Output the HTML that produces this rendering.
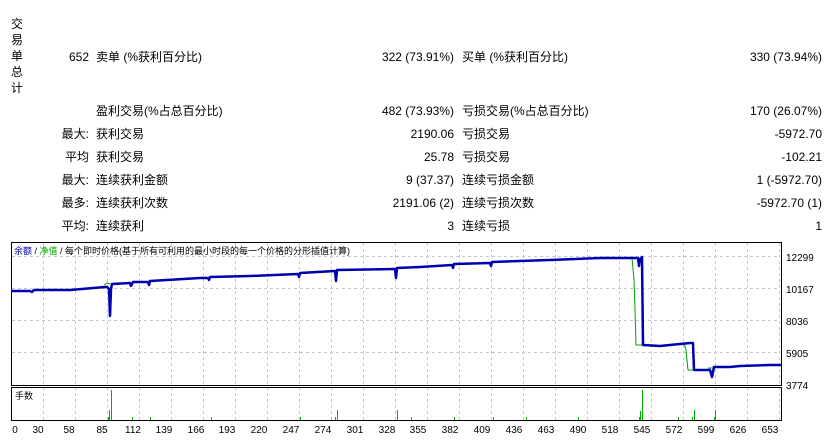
<!DOCTYPE html>
<html><head><meta charset="utf-8"><style>
body{margin:0;width:832px;height:442px;background:#fff;overflow:hidden;position:relative;font-family:"Liberation Sans","Noto Sans CJK SC",sans-serif;font-size:12px;color:#000}
.t{position:absolute;white-space:nowrap;line-height:14px}
.r{text-align:right}
.vc{position:absolute;left:11px;top:16px;width:14px;line-height:16px;font-size:12px}
</style></head><body>
<div class="vc">交<br>易<br>单<br>总<br>计</div>

<div class="t r" style="right:743px;top:50px">652</div>
<div class="t" style="left:96px;top:50px">卖单 (%获利百分比)</div>
<div class="t r" style="right:378px;top:50px">322 (73.91%)</div>
<div class="t" style="left:462px;top:50px">买单 (%获利百分比)</div>
<div class="t r" style="right:10px;top:50px">330 (73.94%)</div>

<div class="t" style="left:96px;top:104px">盈利交易(%占总百分比)</div>
<div class="t r" style="right:378px;top:104px">482 (73.93%)</div>
<div class="t" style="left:462px;top:104px">亏损交易(%占总百分比)</div>
<div class="t r" style="right:10px;top:104px">170 (26.07%)</div>

<div class="t r" style="right:743px;top:127px">最大:</div>
<div class="t" style="left:96px;top:127px">获利交易</div>
<div class="t r" style="right:378px;top:127px">2190.06</div>
<div class="t" style="left:462px;top:127px">亏损交易</div>
<div class="t r" style="right:10px;top:127px">-5972.70</div>

<div class="t r" style="right:743px;top:150px">平均</div>
<div class="t" style="left:96px;top:150px">获利交易</div>
<div class="t r" style="right:378px;top:150px">25.78</div>
<div class="t" style="left:462px;top:150px">亏损交易</div>
<div class="t r" style="right:10px;top:150px">-102.21</div>

<div class="t r" style="right:743px;top:173px">最大:</div>
<div class="t" style="left:96px;top:173px">连续获利金额</div>
<div class="t r" style="right:378px;top:173px">9 (37.37)</div>
<div class="t" style="left:462px;top:173px">连续亏损金额</div>
<div class="t r" style="right:10px;top:173px">1 (-5972.70)</div>

<div class="t r" style="right:743px;top:196px">最多:</div>
<div class="t" style="left:96px;top:196px">连续获利次数</div>
<div class="t r" style="right:378px;top:196px">2191.06 (2)</div>
<div class="t" style="left:462px;top:196px">连续亏损次数</div>
<div class="t r" style="right:10px;top:196px">-5972.70 (1)</div>

<div class="t r" style="right:743px;top:219px">平均:</div>
<div class="t" style="left:96px;top:219px">连续获利</div>
<div class="t r" style="right:378px;top:219px">3</div>
<div class="t" style="left:462px;top:219px">连续亏损</div>
<div class="t r" style="right:10px;top:219px">1</div>

<svg style="position:absolute;left:0;top:0" width="832" height="442" font-family="Liberation Sans, Noto Sans CJK SC, sans-serif">
<g stroke="#c8c8c8" stroke-dasharray="3,3" stroke-width="1">
<line x1="43.5" y1="243" x2="43.5" y2="420"/><line x1="75.5" y1="243" x2="75.5" y2="420"/><line x1="107.5" y1="243" x2="107.5" y2="420"/><line x1="139.5" y1="243" x2="139.5" y2="420"/><line x1="171.5" y1="243" x2="171.5" y2="420"/><line x1="203.5" y1="243" x2="203.5" y2="420"/><line x1="235.5" y1="243" x2="235.5" y2="420"/><line x1="267.5" y1="243" x2="267.5" y2="420"/><line x1="299.5" y1="243" x2="299.5" y2="420"/><line x1="331.5" y1="243" x2="331.5" y2="420"/><line x1="363.5" y1="243" x2="363.5" y2="420"/><line x1="395.5" y1="243" x2="395.5" y2="420"/><line x1="427.5" y1="243" x2="427.5" y2="420"/><line x1="459.5" y1="243" x2="459.5" y2="420"/><line x1="491.5" y1="243" x2="491.5" y2="420"/><line x1="523.5" y1="243" x2="523.5" y2="420"/><line x1="555.5" y1="243" x2="555.5" y2="420"/><line x1="587.5" y1="243" x2="587.5" y2="420"/><line x1="619.5" y1="243" x2="619.5" y2="420"/><line x1="651.5" y1="243" x2="651.5" y2="420"/><line x1="683.5" y1="243" x2="683.5" y2="420"/><line x1="715.5" y1="243" x2="715.5" y2="420"/><line x1="747.5" y1="243" x2="747.5" y2="420"/><line x1="779.5" y1="243" x2="779.5" y2="420"/>
<line x1="12" y1="256.5" x2="780" y2="256.5"/><line x1="12" y1="288.5" x2="780" y2="288.5"/><line x1="12" y1="320.5" x2="780" y2="320.5"/><line x1="12" y1="352.5" x2="780" y2="352.5"/>
</g>
<rect x="11.5" y="242.5" width="770" height="143" fill="none" stroke="#000"/>
<rect x="11.5" y="387.5" width="770" height="33" fill="none" stroke="#000"/>
<text x="14" y="254" font-size="9"><tspan fill="#0000a0">余额</tspan> / <tspan fill="#00a000">净值</tspan> / 每个即时价格(基于所有可利用的最小时段的每一个价格的分形插值计算)</text>
<text x="15" y="399" font-size="9">手数</text>
<polyline fill="none" stroke="#00a000" stroke-width="1" points="104,285 107,283 110,284"/>
<polyline fill="none" stroke="#00a000" stroke-width="1" points="626,258 632,258 634,280 635,310 636,345 643,345"/>
<polyline fill="none" stroke="#00a000" stroke-width="1" points="684,343 686,350 688,370 694,370"/>
<polyline fill="none" stroke="#00a000" stroke-width="1" points="708,368 713,368"/>
<polyline fill="none" stroke="#0000b0" stroke-width="2.5" stroke-linejoin="round" points="11,291 30,291 32,292 34,290 70,290 105,287 107,287 109,289 110,316 111,289 112,284 130,283 131,286 133,282 148,282 149,285 150,281 200,278 208,278 209,280 210,277 250,276 298,274 299,277 300,273 335,271 336,281 337,270 395,269 396,278 397,268 420,267 452,265 453,268 454,264 490,263 491,266 492,262 520,261 550,260 600,258 608,258 625,258 638,258 639,266 640,259 641,258 642,257 643,345 660,346 680,344 690,343 692,343 693,343 694,370 710,370 712,377 714,367 730,367 740,366 770,365 781,365"/>
<g stroke="#00b000" stroke-width="1">
<line x1="111.5" y1="390" x2="111.5" y2="420"/><line x1="109.5" y1="410" x2="109.5" y2="420"/><line x1="108.5" y1="417" x2="108.5" y2="420"/>
<line x1="132.5" y1="417" x2="132.5" y2="420"/><line x1="150.5" y1="417" x2="150.5" y2="420"/><line x1="211.5" y1="417" x2="211.5" y2="420"/>
<line x1="300.5" y1="417" x2="300.5" y2="420"/><line x1="337.5" y1="410" x2="337.5" y2="420"/><line x1="335.5" y1="417" x2="335.5" y2="420"/>
<line x1="397.5" y1="410" x2="397.5" y2="420"/><line x1="411.5" y1="417" x2="411.5" y2="420"/><line x1="454.5" y1="417" x2="454.5" y2="420"/>
<line x1="493.5" y1="417" x2="493.5" y2="420"/><line x1="526.5" y1="417" x2="526.5" y2="420"/><line x1="578.5" y1="417" x2="578.5" y2="420"/>
<line x1="642.5" y1="390" x2="642.5" y2="420"/><line x1="640.5" y1="411" x2="640.5" y2="420"/><line x1="639.5" y1="417" x2="639.5" y2="420"/>
<line x1="678.5" y1="417" x2="678.5" y2="420"/><line x1="694.5" y1="410" x2="694.5" y2="420"/><line x1="692.5" y1="417" x2="692.5" y2="420"/>
<line x1="715.5" y1="410" x2="715.5" y2="420"/><line x1="714.5" y1="417" x2="714.5" y2="420"/>
</g>
<g font-size="10" fill="#000">
<text x="786" y="261">12299</text><text x="786" y="293">10167</text><text x="786" y="325">8036</text><text x="786" y="357">5905</text><text x="786" y="389">3774</text>
</g>
<g font-size="10" fill="#000" text-anchor="middle">
<text x="15" y="433">0</text><text x="38" y="433">30</text><text x="69" y="433">58</text><text x="102" y="433">85</text><text x="133" y="433">112</text><text x="164" y="433">139</text><text x="196" y="433">166</text><text x="227" y="433">193</text><text x="259" y="433">220</text><text x="291" y="433">247</text><text x="323" y="433">274</text><text x="355" y="433">301</text><text x="387" y="433">328</text><text x="418" y="433">355</text><text x="450" y="433">382</text><text x="482" y="433">409</text><text x="514" y="433">436</text><text x="546" y="433">463</text><text x="578" y="433">490</text><text x="610" y="433">518</text><text x="642" y="433">545</text><text x="674" y="433">572</text><text x="706" y="433">599</text><text x="738" y="433">626</text><text x="770" y="433">653</text>
</g>
</svg>
</body></html>
